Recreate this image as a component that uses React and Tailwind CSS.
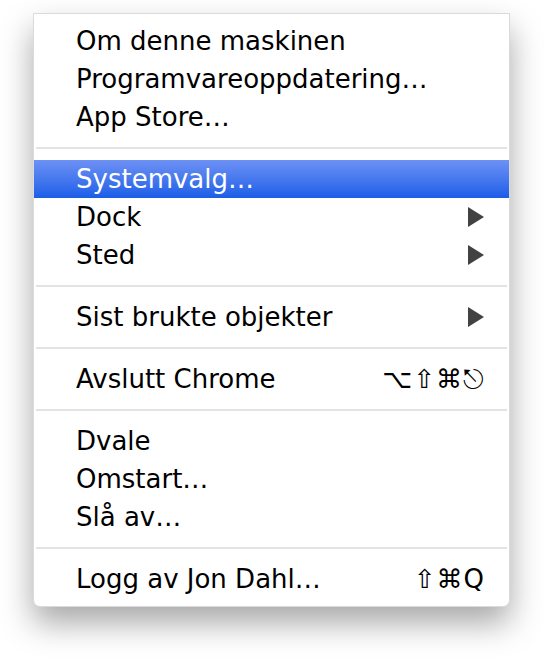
import React from "react";

const font = { fontFamily: '"DejaVu Sans", "Lucida Grande", sans-serif' };

const groups = [
  [
    { label: "Om denne maskinen" },
    { label: "Programvareoppdatering…" },
    { label: "App Store…" },
  ],
  [
    { label: "Systemvalg…", active: true },
    { label: "Dock", sub: true },
    { label: "Sted", sub: true },
  ],
  [{ label: "Sist brukte objekter", sub: true }],
  [{ label: "Avslutt Chrome", keys: "⌥⇧⌘⎋" }],
  [{ label: "Dvale" }, { label: "Omstart…" }, { label: "Slå av…" }],
  [{ label: "Logg av Jon Dahl…", keys: "⇧⌘Q" }],
];

function Arrow() {
  return (
    <svg width="16" height="20" viewBox="0 0 16 20" className="mr-[1px]">
      <path d="M0 0 L16 10 L0 20 Z" fill="#424242" />
    </svg>
  );
}

function Row({ item }) {
  return (
    <div
      className={`h-[38px] flex items-center justify-between pl-[42px] pr-[24px] ${
        item.active ? "bg-gradient-to-b from-[#6d91f4] to-[#1a5de8] text-white" : "text-black"
      }`}
    >
      <span>{item.label}</span>
      {item.sub && <Arrow />}
      {item.keys && <span className="tracking-[1px]">{item.keys}</span>}
    </div>
  );
}

export default function App() {
  return (
    <div className="w-[544px] h-[660px] bg-white pt-[13px] pl-[33px]" style={font}>
      <div className="w-[477px] bg-white border border-[#dadada] rounded-b-[7px] pt-[8px] pb-[8px] shadow-[0_16px_32px_rgba(0,0,0,0.35)] text-[26px] leading-none">
        {groups.map((g, gi) => (
          <div key={gi}>
            {gi > 0 && (
              <div className="h-[24px] flex items-center px-[2px]">
                <div className="h-[2px] w-full bg-[#e3e3e3]" />
              </div>
            )}
            {g.map((item) => (
              <Row key={item.label} item={item} />
            ))}
          </div>
        ))}
      </div>
    </div>
  );
}
